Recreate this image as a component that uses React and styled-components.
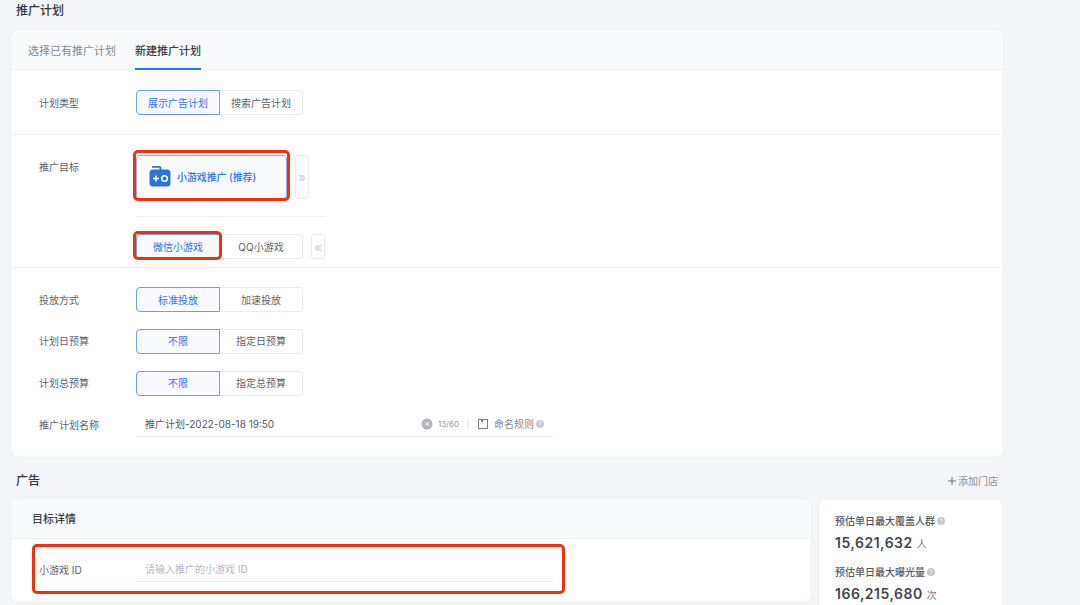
import React from 'react';
import styled, { createGlobalStyle } from 'styled-components';

const Global = createGlobalStyle`
  html, body { margin: 0; padding: 0; background: #f4f5f8; }
  body { font-family: Inter, "Noto Sans CJK SC", "Liberation Sans", sans-serif; color: #3a3d44; }
  * { box-sizing: border-box; }
`;

const Page = styled.div`
  width: 1080px;
  height: 605px;
  overflow: hidden;
  padding: 0 77px 0 11px;
`;

const SectionHead = styled.div`
  height: ${p => p.$h}px;
  padding: ${p => p.$pt}px 5px 0;
  display: flex;
  justify-content: space-between;
  align-items: flex-start;
`;

const SectionTitle = styled.div`
  font-size: 12px;
  line-height: 18px;
  font-weight: 500;
  color: #33363c;
`;

const AddStore = styled.div`
  display: flex;
  align-items: center;
  gap: 2px;
  font-size: 10px;
  line-height: 18px;
  color: #8a8e96;
`;

const Card = styled.div`
  background: #fff;
  border: 1px solid #f8f9fb;
  box-shadow: 0 0 2px rgba(30, 40, 70, 0.07);
  border-radius: 6px;
  overflow: hidden;
`;

const TabBar = styled.div`
  height: 39px;
  background: #f9fafb;
  border-bottom: 1px solid #eff0f3;
  display: flex;
  gap: 19px;
  padding-left: 16px;
`;

const Tab = styled.div`
  height: 39px;
  font-size: 11px;
  line-height: 40px;
  color: ${p => (p.$active ? '#3a3d44' : '#84888f')};
  font-weight: ${p => (p.$active ? 500 : 400)};
  border-bottom: 2px solid ${p => (p.$active ? '#2f72ee' : 'transparent')};
`;

const Block = styled.div`
  padding: ${p => p.$pad || '0'};
  border-bottom: ${p => (p.$line ? '1px solid #f0f1f4' : 'none')};
  display: flex;
  flex-direction: column;
  gap: ${p => p.$gap || 0}px;
`;

const Row = styled.div`
  display: flex;
  align-items: ${p => (p.$top ? 'flex-start' : 'center')};
  padding-left: 27px;
`;

const Label = styled.div`
  width: 97px;
  flex: none;
  font-size: 10px;
  line-height: 16px;
  color: #5f636b;
  padding-top: ${p => p.$pt || 0}px;
`;

const Seg = styled.div`
  display: flex;
  width: 167px;
  height: 25px;
`;

const SegBtn = styled.div`
  flex: ${p => (p.$active ? '0 0 84px' : '1')};
  display: flex;
  align-items: center;
  justify-content: center;
  padding-bottom: 1px;
  font-size: 10px;
  color: ${p => (p.$active ? '#2f72ee' : '#5f636b')};
  background: ${p => (p.$active ? '#f8faff' : '#fff')};
  border: 1px solid ${p => (p.$active ? '#6f9cf3' : '#e8eaee')};
  border-left-width: ${p => (p.$active ? 1 : 0)}px;
  border-radius: ${p => (p.$active ? '4px 0 0 4px' : '0 4px 4px 0')};
`;

const MarkedSegBtn = styled(SegBtn)`
  position: relative;
  flex: 0 0 84px;
`;

const Stack = styled.div`
  display: flex;
  flex-direction: column;
  width: 190px;
`;

const TargetLine = styled.div`
  display: flex;
  gap: 8px;
  align-items: stretch;
`;

const TargetCard = styled.div`
  position: relative;
  width: 151px;
  height: 44px;
  display: flex;
  align-items: center;
  gap: 6px;
  padding: 0 0 2px 12px;
  font-size: 10px;
  font-weight: 500;
  letter-spacing: -0.1px;
  color: #2f72ee;
  background: #f8faff;
  border: 1px solid #8fb2f5;
  border-radius: 4px;
`;

const Chevron = styled.div`
  width: 14px;
  flex: none;
  display: flex;
  align-items: center;
  justify-content: center;
  border: 1px solid #e8eaee;
  border-radius: 3px;
  font-size: 13px;
  color: #c8cbd1;
  background: #fff;
`;

const Rule = styled.div`
  height: 1px;
  background: #eff0f3;
  margin: 17px 0;
`;

const Highlight = styled.div`
  position: absolute;
  top: ${p => p.$t}px;
  left: ${p => p.$l}px;
  right: ${p => p.$r}px;
  bottom: ${p => p.$b}px;
  border: 3px solid #f0300f;
  border-radius: 5px;
  pointer-events: none;
`;

const Input = styled.div`
  width: 417px;
  height: 25px;
  padding: 0 9px 1px 9px;
  display: flex;
  align-items: center;
  font-size: 10px;
  color: ${p => (p.$placeholder ? '#b4b7bd' : '#55585f')};
  border-bottom: 1px solid #e9ebef;
`;

const InputText = styled.div`
  flex: 1;
`;

const Suffix = styled.div`
  display: flex;
  align-items: center;
  color: #9a9ea6;
  font-size: 8px;
`;

const Count = styled.span`
  margin-left: 5px;
`;

const Sep = styled.div`
  width: 1px;
  height: 8px;
  background: #e3e5e9;
  margin: 0 9px 0 9px;
`;

const RuleText = styled.span`
  margin: 0 2px 0 6px;
  font-size: 10px;
  color: #85898f;
`;

const Split = styled.div`
  display: flex;
  gap: 8px;
  align-items: flex-start;
`;

const DetailCard = styled(Card)`
  width: 800px;
  height: 103px;
`;

const DetailHead = styled.div`
  height: 39px;
  padding-left: 20px;
  background: #f9fafb;
  border-bottom: 1px solid #eff0f3;
  font-size: 11px;
  font-weight: 500;
  line-height: 39px;
  color: #3a3d44;
`;

const DetailBody = styled.div`
  padding-top: 18px;
`;

const DetailRow = styled(Row)`
  position: relative;
`;

const StatCard = styled(Card)`
  width: 184px;
  height: 130px;
  padding: 13px 15px;
  display: flex;
  flex-direction: column;
  gap: 6px;
`;

const StatTitle = styled.div`
  display: flex;
  align-items: center;
  gap: 2px;
  font-size: 10px;
  line-height: 16px;
  font-weight: 500;
  color: #55585f;
`;

const StatValue = styled.div`
  display: flex;
  align-items: baseline;
  gap: 4px;
  height: 29px;
  padding-top: 3px;
  font-size: 14px;
  line-height: 22px;
  font-weight: 600;
  letter-spacing: 0.5px;
  color: #43464d;
`;

const StatUnit = styled.span`
  font-size: 10px;
  font-weight: 400;
  letter-spacing: 0;
  color: #75797f;
`;

const Help = () => (
  <svg width="8" height="8" viewBox="0 0 8 8">
    <circle cx="4" cy="4" r="4" fill="#c5c8ce" />
    <path d="M2.9 3.1a1.1 1.1 0 1 1 1.6 1c-.4.2-.5.4-.5.7" stroke="#fff" strokeWidth=".8" fill="none" />
    <circle cx="4" cy="6" r=".5" fill="#fff" />
  </svg>
);

const Clear = () => (
  <svg width="12" height="12" viewBox="0 0 12 12">
    <circle cx="6" cy="6" r="5.5" fill="#b0b5c0" />
    <path d="M4 4l4 4M8 4l-4 4" stroke="#fff" strokeWidth="1" />
  </svg>
);

const Book = () => (
  <svg width="10" height="10" viewBox="0 0 10 10" fill="none">
    <rect x=".5" y=".5" width="9" height="9" stroke="#7b7f87" />
    <path d="M3 .5v3l1-.8 1 .8v-3" fill="#7b7f87" />
  </svg>
);

const GameIcon = () => (
  <svg width="22" height="22" viewBox="0 0 22 22">
    <path d="M3 1.8h7.4a1 1 0 0 1 1 1v2.2" fill="none" stroke="#2f6fe4" strokeWidth="1.8" />
    <rect x="0.5" y="4.5" width="21" height="17" rx="3.5" fill="#2f6fe4" />
    <path d="M4 13.5h6M7 10.5v6" stroke="#fff" strokeWidth="1.6" />
    <circle cx="15.5" cy="13.5" r="2.8" fill="none" stroke="#fff" strokeWidth="1.6" />
  </svg>
);

const Segmented = ({ on, off }) => (
  <Seg>
    <SegBtn $active>{on}</SegBtn>
    <SegBtn>{off}</SegBtn>
  </Seg>
);

const Stat = ({ title, value, unit }) => (
  <div>
    <StatTitle>{title}<Help /></StatTitle>
    <StatValue>{value}<StatUnit>{unit}</StatUnit></StatValue>
  </div>
);

export default function App() {
  return (
    <Page>
      <Global />
      <SectionHead $h={30} $pt={2}>
        <SectionTitle>推广计划</SectionTitle>
      </SectionHead>
      <Card>
        <TabBar>
          <Tab>选择已有推广计划</Tab>
          <Tab $active>新建推广计划</Tab>
        </TabBar>
        <Block $line $pad="20px 0 19px">
          <Row>
            <Label>计划类型</Label>
            <Segmented on="展示广告计划" off="搜索广告计划" />
          </Row>
        </Block>
        <Block $line $pad="20px 0 8px">
          <Row $top>
            <Label $pt={4}>推广目标</Label>
            <Stack>
              <TargetLine>
                <TargetCard>
                  <GameIcon />
                  小游戏推广 (推荐)
                  <Highlight $t={-6} $l={-4} $r={-4} $b={-3} />
                </TargetCard>
                <Chevron>»</Chevron>
              </TargetLine>
              <Rule />
              <TargetLine>
                <Seg>
                  <MarkedSegBtn $active>
                    微信小游戏
                    <Highlight $t={-4} $l={-4} $r={-3} $b={-2} />
                  </MarkedSegBtn>
                  <SegBtn>QQ小游戏</SegBtn>
                </Seg>
                <Chevron>«</Chevron>
              </TargetLine>
            </Stack>
          </Row>
        </Block>
        <Block $pad="19px 0 19px" $gap={16.75}>
          <Row>
            <Label>投放方式</Label>
            <Segmented on="标准投放" off="加速投放" />
          </Row>
          <Row>
            <Label>计划日预算</Label>
            <Segmented on="不限" off="指定日预算" />
          </Row>
          <Row>
            <Label>计划总预算</Label>
            <Segmented on="不限" off="指定总预算" />
          </Row>
          <Row>
            <Label>推广计划名称</Label>
            <Input>
              <InputText>推广计划-2022-08-18 19:50</InputText>
              <Suffix>
                <Clear />
                <Count>13/60</Count>
                <Sep />
                <Book />
                <RuleText>命名规则</RuleText>
                <Help />
              </Suffix>
            </Input>
          </Row>
        </Block>
      </Card>
      <SectionHead $h={42} $pt={15}>
        <SectionTitle>广告</SectionTitle>
        <AddStore>
          <svg width="8" height="8" viewBox="0 0 8 8">
            <path d="M4 0v8M0 4h8" stroke="#6b6f76" strokeWidth="1" />
          </svg>
          添加门店
        </AddStore>
      </SectionHead>
      <Split>
        <DetailCard>
          <DetailHead>目标详情</DetailHead>
          <DetailBody>
            <DetailRow>
              <Label>小游戏 ID</Label>
              <Input $placeholder>请输入推广的小游戏 ID</Input>
              <Highlight $t={-13} $l={20} $r={245} $b={-12} />
            </DetailRow>
          </DetailBody>
        </DetailCard>
        <StatCard>
          <Stat title="预估单日最大覆盖人群" value="15,621,632" unit="人" />
          <Stat title="预估单日最大曝光量" value="166,215,680" unit="次" />
        </StatCard>
      </Split>
    </Page>
  );
}
